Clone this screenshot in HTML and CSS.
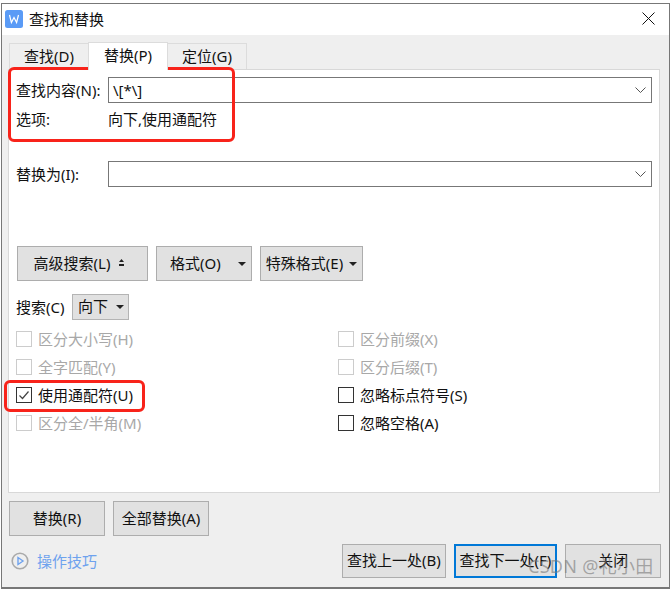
FILE: index.html
```html
<!DOCTYPE html>
<html lang="zh-CN">
  <head>
    <meta charset="utf-8">
    <title>查找和替换</title>
    <link rel="stylesheet" href="styles.css">
  </head>
  <body>
    <div class="dialog">
      <div class="titlebar">
        <svg class="logo" width="18" height="18" viewBox="0 0 18 18">
          <rect width="18" height="18" rx="2.5" fill="#5a9bf6"/>
          <path d="M4.5 5 L6.4 12.5 L9 7.5 L11.6 12.5 L13.5 5" fill="none" stroke="#fff" stroke-width="1.2"/>
        </svg>
        <span class="title">查找和替换</span>
        <svg class="close" width="13" height="13" viewBox="0 0 13 13">
          <path d="M0.5 0.5 L12.5 12.5 M12.5 0.5 L0.5 12.5" stroke="#111" stroke-width="1" fill="none"/>
        </svg>
      </div>
      <div class="body">
        <div class="tabs">
          <div class="tab">查找(D)</div>
          <div class="tab active">替换(P)</div>
          <div class="tab">定位(G)</div>
        </div>
        <div class="panel">
          <div class="field">
            <label class="field-label">查找内容(N):</label>
            <div class="combo"><span>\[*\]</span>
              <svg width="11" height="6" viewBox="0 0 11 6"><path d="M0.5 0.5 L5.5 5.5 L10.5 0.5" fill="none" stroke="#555"/></svg>
            </div>
          </div>
          <div class="options">
            <span class="field-label">选项:</span>
            <span>向下,使用通配符</span>
          </div>
          <div class="field replace">
            <label class="field-label">替换为(I):</label>
            <div class="combo"><span></span>
              <svg width="11" height="6" viewBox="0 0 11 6"><path d="M0.5 0.5 L5.5 5.5 L10.5 0.5" fill="none" stroke="#555"/></svg>
            </div>
          </div>
          <div class="tools">
            <div class="btn adv">高级搜索(L)
              <svg width="7" height="8" viewBox="0 0 7 8"><path d="M3.5 0 L6 3 H1 Z M1 5 H6 V7 H1 Z" fill="#222"/></svg>
            </div>
            <div class="btn fmt">格式(O)<i class="caret"></i></div>
            <div class="btn special">特殊格式(E)<i class="caret"></i></div>
          </div>
          <div class="direction">
            <span>搜索(C)</span>
            <div class="btn dir">向下<i class="caret"></i></div>
          </div>
          <div class="checks">
            <div class="check off"><i class="box"></i>区分大小写(H)</div>
            <div class="check off"><i class="box"></i>区分前缀(X)</div>
            <div class="check off"><i class="box"></i>全字匹配(Y)</div>
            <div class="check off"><i class="box"></i>区分后缀(T)</div>
            <div class="check"><i class="box">
              <svg width="14" height="14" viewBox="0 0 14 14"><path d="M2.5 7.5 L5.5 10.5 L11.5 3.5" fill="none" stroke="#444" stroke-width="1.2"/></svg>
            </i>使用通配符(U)</div>
            <div class="check"><i class="box"></i>忽略标点符号(S)</div>
            <div class="check off"><i class="box"></i>区分全/半角(M)</div>
            <div class="check"><i class="box"></i>忽略空格(A)</div>
          </div>
        </div>
        <div class="actions">
          <div class="btn wide">替换(R)</div>
          <div class="btn wide">全部替换(A)</div>
        </div>
        <div class="footer">
          <div class="tips">
            <svg width="18" height="18" viewBox="0 0 18 18">
              <circle cx="9" cy="9" r="7.8" fill="none" stroke="#aaa" stroke-width="1.6"/>
              <path d="M7 5.5 L12 9 L7 12.5 Z" fill="none" stroke="#6ea2ee" stroke-width="1.4"/>
            </svg>
            <span>操作技巧</span>
          </div>
          <div class="btn nav">查找上一处(B)</div>
          <div class="btn nav primary">查找下一处(F)</div>
          <div class="btn close-btn">关闭</div>
        </div>
      </div>
    </div>
    <div class="mark mark-find"></div>
    <div class="mark mark-wild"></div>
    <div class="watermark">CSDN @礼小田</div>
  </body>
</html>
```

FILE: styles.css
```css
html, body {margin: 0; padding: 0}
body {width: 671px; height: 589px; background: #fff; color: #111; position: relative; overflow: hidden;
  font: 15px/20px "Noto Sans", "Noto Sans CJK SC", sans-serif}
.dialog {box-sizing: border-box; width: 669px; height: 586px; margin: 3px 0 0 1px; border: 1px solid #777; border-bottom-width: 2px; display: flex; flex-direction: column}
.titlebar {box-sizing: border-box; height: 31px; background: #fff; display: flex; align-items: center; padding: 0 14px 2px 3px; flex: none}
.logo {margin-right: 6px}
.title {flex: 1}
.body {flex: 1; background: #efefef; display: flex; flex-direction: column; padding: 7px 8px 0 6px}

.tabs {display: flex; align-items: flex-end; height: 27px; padding-left: 1px}
.tab {box-sizing: border-box; width: 80px; height: 26px; border: 1px solid #dcdcdc; border-bottom: 0; text-align: center; line-height: 25px; margin-right: -1px}
.tab.active {background: #fff; position: relative; z-index: 1; margin-bottom: -1px; height: 28px}

.panel {box-sizing: border-box; width: 652px; height: 424px; background: #fff; border: 1px solid #d8d8d8; padding: 7px 7px 0 7px}
.field {display: flex; align-items: center; height: 26px}
.field-label {width: 92px; flex: none}
.combo {box-sizing: border-box; flex: 1; height: 26px; border: 1px solid #777; display: flex; align-items: center; justify-content: space-between; padding: 0 5px 0 4px}
.options {display: flex; align-items: center; height: 20px; margin-top: 6px}
.replace {margin-top: 32px}

.btn {box-sizing: border-box; background: #e1e1e1; border: 1px solid #adadad; display: flex; align-items: center; justify-content: center; padding-bottom: 2px}
.caret {width: 0; height: 0; border: 4px solid transparent; border-top: 4px solid #222; border-bottom: 0; display: block; margin-top: 2px}
.tools {display: flex; gap: 8px; margin-top: 59px; padding-left: 1px}
.tools .btn {height: 35px}
.adv {width: 131px; gap: 8px; padding-right: 6px}
.fmt {width: 96px; justify-content: flex-start; padding-left: 13px}
.fmt .caret {margin-left: 17px}
.special {width: 103px; gap: 6px}
.direction {display: flex; align-items: center; gap: 8px; margin-top: 13px; height: 26px}
.dir {width: 57px; height: 26px; gap: 8px; border-color: #b4b4b4}

.checks {display: grid; grid-template-columns: 322px 1fr; grid-auto-rows: 28px; margin-top: 5px}
.check {display: flex; align-items: center; gap: 6px}
.box {box-sizing: border-box; width: 16px; height: 16px; border: 1px solid #333; display: flex; align-items: center; justify-content: center; background: #fff}
.check.off {color: #a8a8a8}
.check.off .box {border-color: #ccc}

.actions {display: flex; gap: 8px; margin-top: 8px; padding-left: 1px}
.wide {width: 96px; height: 35px}
.footer {display: flex; align-items: center; gap: 8px; margin-top: 8px; padding-left: 3px}
.tips {display: flex; align-items: center; gap: 8px; color: #6ea2ee; width: 324px}
.nav {width: 104px; height: 34px}
.primary {border: 2px solid #0078d7}
.close-btn {width: 96px; height: 34px}

.mark {position: absolute; box-sizing: border-box; border: 3px solid #f8231a; border-radius: 6px}
.mark-find {left: 8px; top: 67px; width: 227px; height: 75px}
.mark-wild {left: 4px; top: 380px; width: 141px; height: 32px}
.watermark {position: absolute; left: 528px; top: 554px; font-size: 18px; line-height: 24px; letter-spacing: .3px; color: rgba(120,120,120,.6); white-space: nowrap}
```
